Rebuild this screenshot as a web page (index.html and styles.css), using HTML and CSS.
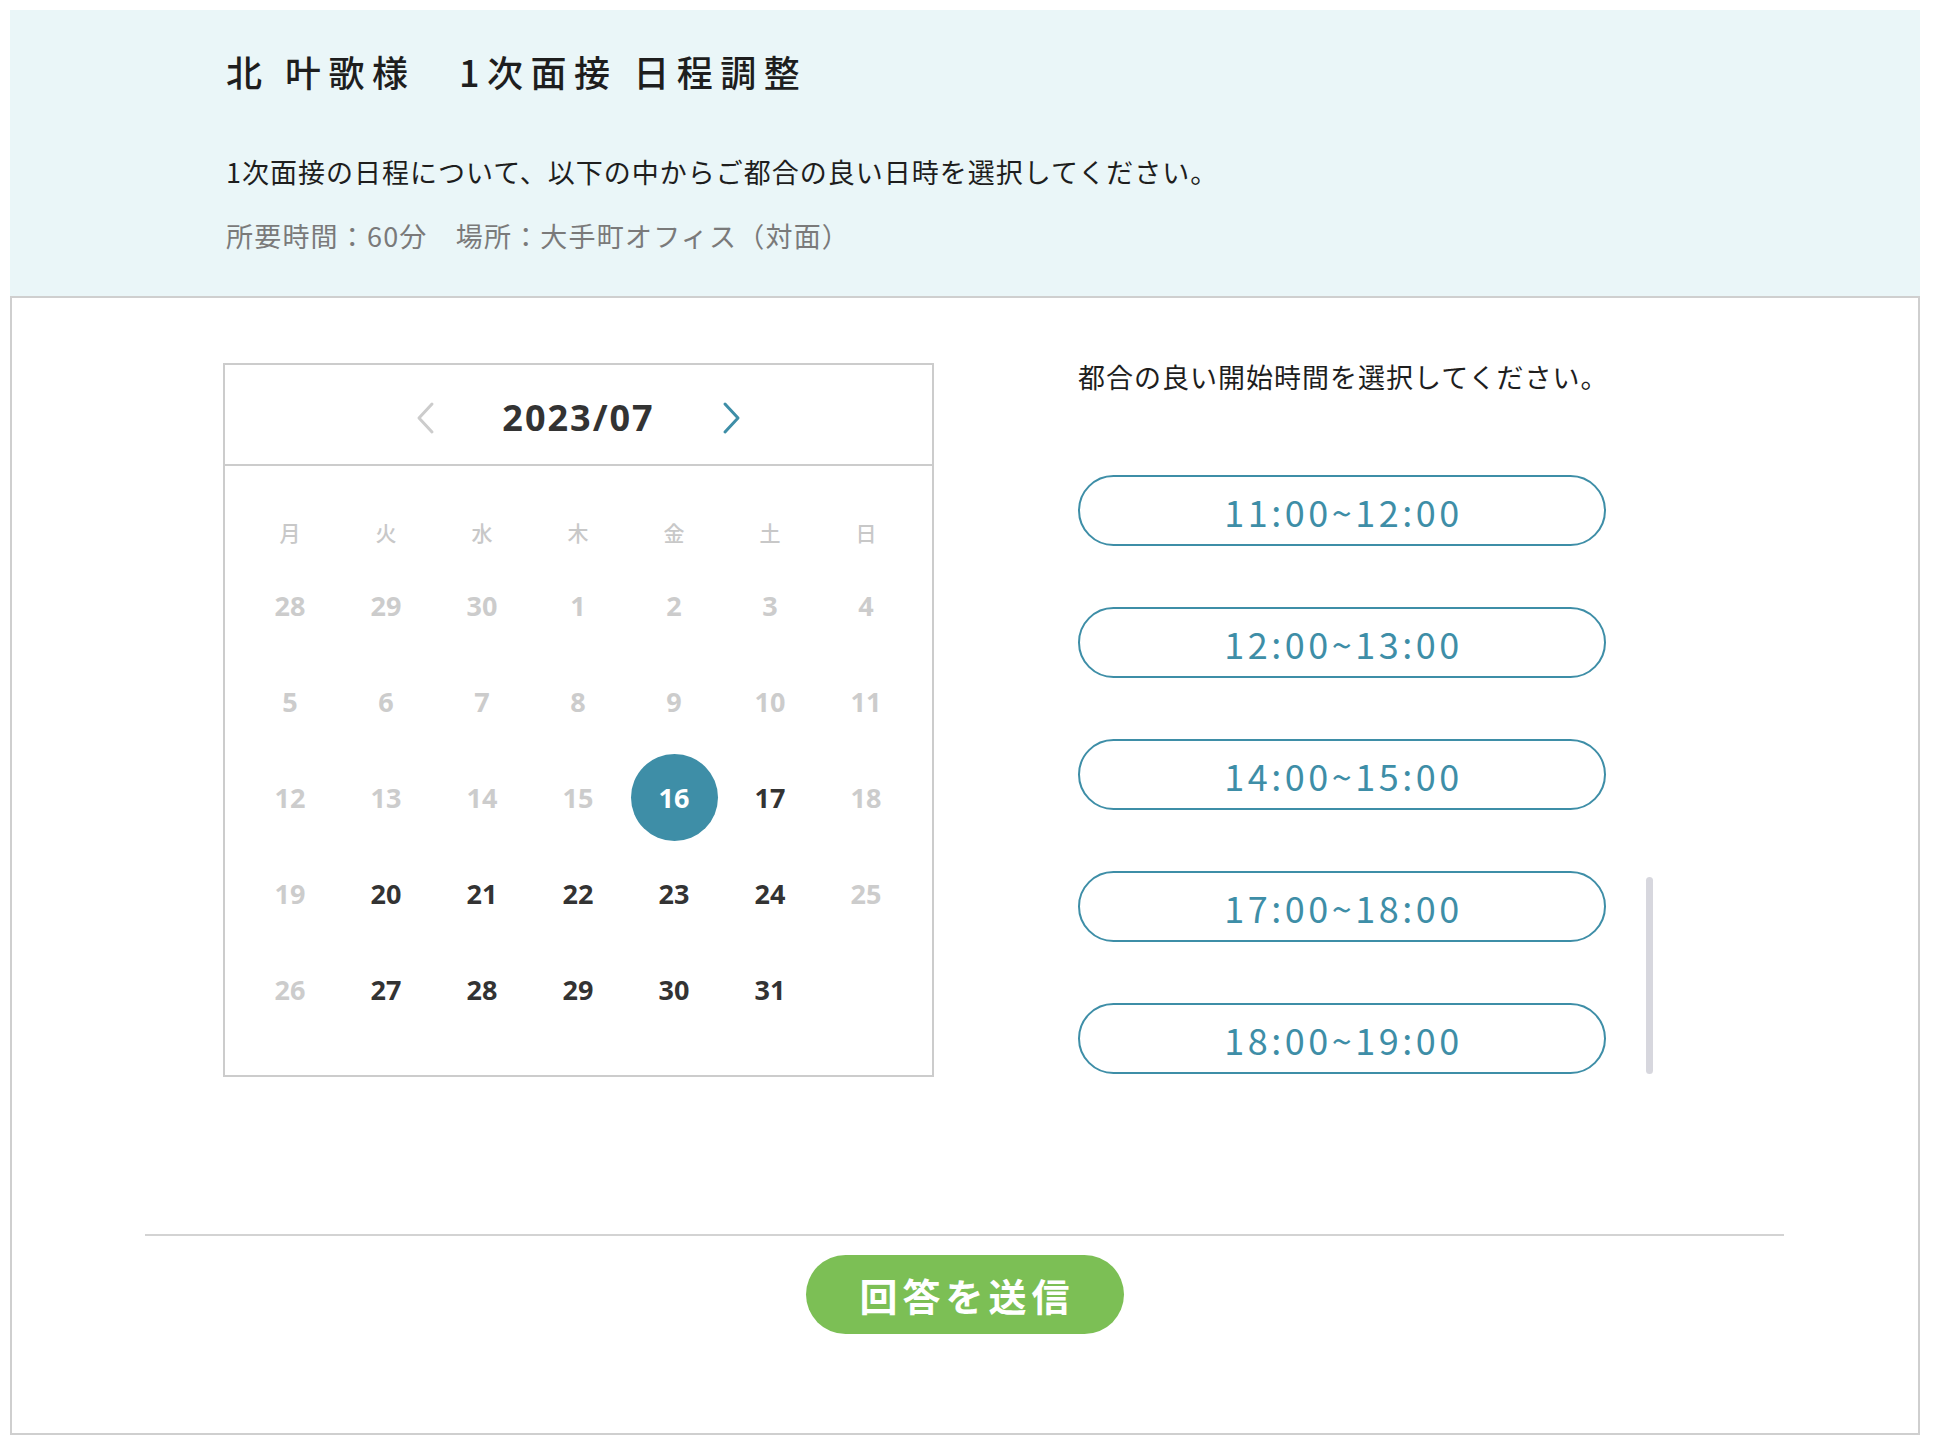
FILE: index.html
```html
<!DOCTYPE html>
<html lang="ja">
<head>
<meta charset="utf-8">
<title>1次面接 日程調整</title>
<link rel="stylesheet" href="styles.css">
</head>
<body>
<div class="page">
  <header class="intro">
    <h1 class="title">北 叶歌様　1次面接 日程調整</h1>
    <p class="lead">1次面接の日程について、以下の中からご都合の良い日時を選択してください。</p>
    <p class="meta">所要時間：60分　場所：大手町オフィス（対面）</p>
  </header>
  <main class="panel">
    <div class="picker">
      <section class="calendar">
        <div class="cal-head">
          <button class="nav prev" type="button" aria-label="前の月">
            <svg width="22" height="34" viewBox="0 0 22 34"><path d="M18 3 L5 17 L18 31" fill="none" stroke="currentColor" stroke-width="3" stroke-linecap="round" stroke-linejoin="round"/></svg>
          </button>
          <span class="month">2023/07</span>
          <button class="nav next" type="button" aria-label="次の月">
            <svg width="22" height="34" viewBox="0 0 22 34"><path d="M4 3 L17 17 L4 31" fill="none" stroke="currentColor" stroke-width="3" stroke-linecap="round" stroke-linejoin="round"/></svg>
          </button>
        </div>
        <div class="cal-body">
          <div class="weekdays">
            <span>月</span><span>火</span><span>水</span><span>木</span><span>金</span><span>土</span><span>日</span>
          </div>
          <div class="days">
            <span class="day off">28</span><span class="day off">29</span><span class="day off">30</span><span class="day off">1</span><span class="day off">2</span><span class="day off">3</span><span class="day off">4</span>
            <span class="day off">5</span><span class="day off">6</span><span class="day off">7</span><span class="day off">8</span><span class="day off">9</span><span class="day off">10</span><span class="day off">11</span>
            <span class="day off">12</span><span class="day off">13</span><span class="day off">14</span><span class="day off">15</span><span class="day selected"><span class="dot">16</span></span><span class="day">17</span><span class="day off">18</span>
            <span class="day off">19</span><span class="day">20</span><span class="day">21</span><span class="day">22</span><span class="day">23</span><span class="day">24</span><span class="day off">25</span>
            <span class="day off">26</span><span class="day">27</span><span class="day">28</span><span class="day">29</span><span class="day">30</span><span class="day">31</span><span class="day empty"></span>
          </div>
        </div>
      </section>
      <section class="slots">
        <p class="slots-title">都合の良い開始時間を選択してください。</p>
        <div class="slot-list">
          <button class="slot" type="button">11:00~12:00</button>
          <button class="slot" type="button">12:00~13:00</button>
          <button class="slot" type="button">14:00~15:00</button>
          <button class="slot" type="button">17:00~18:00</button>
          <button class="slot" type="button">18:00~19:00</button>
        </div>
        <div class="scroll-thumb"></div>
      </section>
    </div>
    <div class="footer">
      <button class="submit" type="button">回答を送信</button>
    </div>
  </main>
</div>
</body>
</html>
```
FILE: styles.css
```css
* { box-sizing: border-box; }

html, body { background: #ffffff; }

body {
  margin: 10px;
  font-family: "Noto Sans CJK JP", "Noto Sans", sans-serif;
  color: #222222;
}

.page {
  width: 1910px;
}

/* ---------- header band ---------- */
.intro {
  background: #eaf6f8;
  padding: 36px 0 40px 216px;
  border-bottom: 2px solid #cfcfcf;
}

.title {
  margin: 0;
  font-size: 36px;
  line-height: 50px;
  font-weight: 500;
  letter-spacing: 7.5px;
  color: #1e1e1e;
}

.lead {
  margin: 56px 0 0;
  font-size: 27px;
  line-height: 40px;
  letter-spacing: 1px;
  color: #1e1e1e;
}

.meta {
  margin: 24px 0 0;
  font-size: 27px;
  line-height: 40px;
  letter-spacing: 1.2px;
  color: #7a7a7a;
}

/* ---------- panel ---------- */
.panel {
  border: 2px solid #cfcfcf;
  border-top: none;
  padding: 65px 0 99px;
}

.picker {
  display: flex;
  align-items: flex-start;
  gap: 144px;
  padding-left: 211px;
}

/* ---------- calendar ---------- */
.calendar {
  width: 711px;
  border: 2px solid #cccccc;
}

.cal-head {
  height: 101px;
  border-bottom: 2px solid #cccccc;
  display: flex;
  align-items: center;
  justify-content: center;
  gap: 66px;
  padding-top: 6px;
}

.nav {
  border: none;
  background: none;
  padding: 0;
  width: 22px;
  height: 34px;
  display: flex;
  cursor: pointer;
}

.nav.prev { color: #cccccc; }
.nav.next { color: #3e8ea7; }

.month {
  font-family: "Open Sans", "Noto Sans", sans-serif;
  font-weight: 700;
  font-size: 36px;
  letter-spacing: 2px;
  color: #333333;
  line-height: 50px;
}

.cal-body {
  padding: 41px 17px 38px;
}

.weekdays,
.days {
  display: grid;
  grid-template-columns: repeat(7, 96px);
}

.weekdays span {
  height: 50px;
  display: flex;
  align-items: center;
  justify-content: center;
  font-size: 21px;
  font-weight: 500;
  color: #c8c8c8;
}

.day {
  height: 96px;
  display: flex;
  align-items: center;
  justify-content: center;
  font-family: "Open Sans", "Noto Sans", sans-serif;
  font-weight: 700;
  font-size: 27px;
  color: #333333;
}

.day.off { color: #cccccc; }

.dot {
  width: 87px;
  height: 87px;
  border-radius: 50%;
  background: #3e8ea7;
  color: #ffffff;
  display: flex;
  align-items: center;
  justify-content: center;
}

/* ---------- time slots ---------- */
.slots {
  position: relative;
  width: 600px;
}

.slots-title {
  margin: 0;
  font-size: 27px;
  line-height: 28px;
  letter-spacing: 1px;
  color: #1e1e1e;
}

.slot-list {
  margin-top: 84px;
  display: flex;
  flex-direction: column;
  gap: 61px;
}

.slot {
  width: 528px;
  height: 71px;
  border: 2px solid #3e8ea7;
  border-radius: 36px;
  background: #ffffff;
  color: #3e8ea7;
  font-family: "Noto Sans CJK JP", sans-serif;
  font-size: 36px;
  letter-spacing: 3.5px;
  padding: 0 0 0 3px;
  line-height: 1;
  cursor: pointer;
}

.scroll-thumb {
  position: absolute;
  left: 568px;
  top: 514px;
  width: 7px;
  height: 197px;
  border-radius: 4px;
  background: #d7d7de;
}

/* ---------- footer ---------- */
.footer {
  margin: 157px 134px 0 133px;
  border-top: 2px solid #d3d3d3;
  padding-top: 19px;
  display: flex;
  justify-content: center;
}

.submit {
  width: 318px;
  height: 79px;
  border: none;
  border-radius: 40px;
  background: #7cbf55;
  color: #ffffff;
  font-family: "Noto Sans CJK JP", sans-serif;
  font-size: 38px;
  font-weight: 700;
  letter-spacing: 5px;
  padding: 0 0 0 5px;
  cursor: pointer;
}
```
